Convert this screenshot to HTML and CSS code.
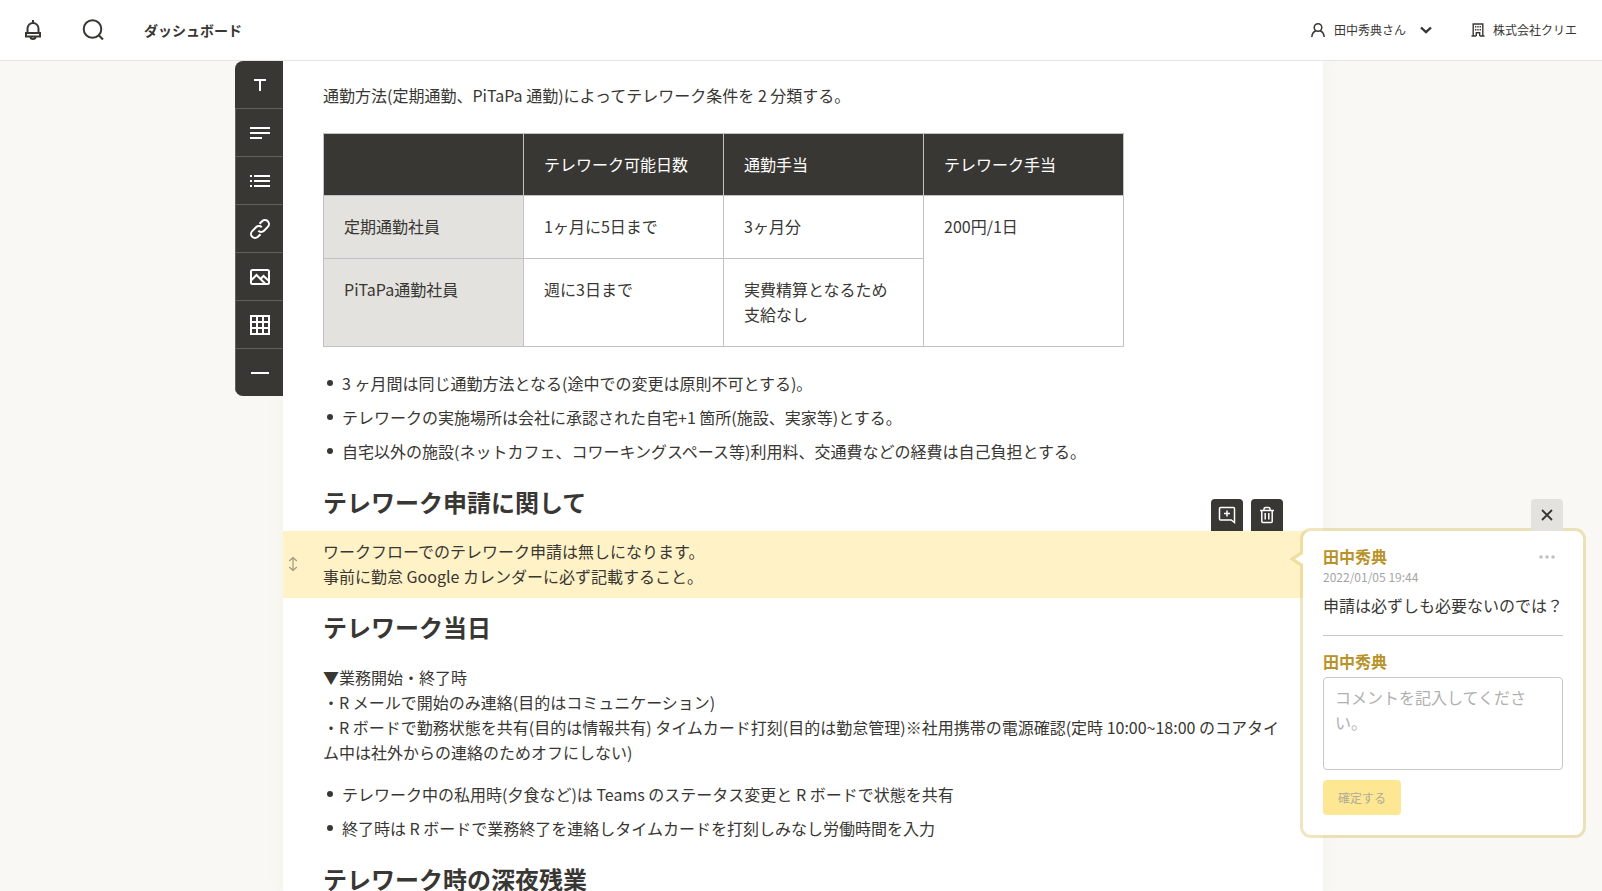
FILE: index.html
```html
<!DOCTYPE html>
<html lang="ja">
<head>
<meta charset="utf-8">
<meta name="viewport" content="width=device-width, initial-scale=1">
<title>ダッシュボード</title>
<link rel="stylesheet" href="styles.css">
</head>
<body>
<header class="header">
  <nav class="header-nav">
    <button class="icon-button" type="button" aria-label="お知らせ">
      <svg width="24" height="24" viewBox="0 0 24 24" fill="none" stroke="currentColor" stroke-width="2"><path d="M12 2v3M6.500 15v-4.500a5.500 5.500 0 0 1 11 0V15M5 15h14v3.500H5zM9.500 19a2.500 2 0 0 0 5 0"/></svg>
    </button>
    <button class="icon-button" type="button" aria-label="検索">
      <svg width="24" height="24" viewBox="0 0 24 24" fill="none" stroke="currentColor" stroke-width="2"><circle cx="11.500" cy="11" r="8.800"/><path d="M17.700 17.200l4.300 4.300"/></svg>
    </button>
    <a class="header-title" href="#">ダッシュボード</a>
  </nav>
  <div class="header-account">
    <button class="account" type="button">
      <svg width="16" height="16" viewBox="0 0 16 16" fill="none" stroke="currentColor" stroke-width="1.500"><circle cx="8" cy="5.500" r="3.800"/><path d="M1.800 15c.3-3.500 2-5.300 4-6.200M14.200 15c-.3-3.500-2-5.300-4-6.200"/></svg>
      <span>田中秀典さん</span>
      <svg class="chevron" width="12" height="8" viewBox="0 0 12 8" fill="none" stroke="currentColor" stroke-width="2.400"><path d="M1 1.500l5 4.700 5-4.700"/></svg>
    </button>
    <a class="company" href="#">
      <svg width="14" height="14" viewBox="0 0 14 14" fill="none" stroke="currentColor"><path stroke-width="1.400" d="M2.200 13V1h9.600v12M.5 13h4.700M8.800 13h4.700M5.300 13V9.700h3.400V13"/><path stroke-width="1.400" d="M4 3.800h1.400M6.300 3.800h1.400M8.600 3.800H10M4 6.700h1.400M6.300 6.700h1.400M8.600 6.700H10"/></svg>
      <span>株式会社クリエ</span>
    </a>
  </div>
</header>

<main class="workspace">
  <div class="toolbar" role="toolbar" aria-label="ブロックを追加">
    <button class="tool" type="button" aria-label="見出し"><svg width="24" height="24" viewBox="0 0 24 24"><path d="M6 7h12M12 7v11"/></svg></button>
    <button class="tool" type="button" aria-label="文章"><svg width="24" height="24" viewBox="0 0 24 24"><path d="M2 7h20M2 12h20M2 17h12"/></svg></button>
    <button class="tool" type="button" aria-label="リスト"><svg width="24" height="24" viewBox="0 0 24 24"><path d="M2 7h2M6 7h16M2 12h2M6 12h16M2 17h2M6 17h16"/></svg></button>
    <button class="tool" type="button" aria-label="リンク"><svg width="24" height="24" viewBox="0 0 24 24"><path d="M10.300 13.700a4 4 0 0 0 5.700 0l3.800-3.800a4 4 0 0 0-5.700-5.700l-2.600 2.600M13.700 10.300a4 4 0 0 0-5.700 0l-3.800 3.800a4 4 0 0 0 5.700 5.700l2.600-2.600"/></svg></button>
    <button class="tool" type="button" aria-label="画像"><svg width="24" height="24" viewBox="0 0 24 24"><rect x="3" y="5" width="18" height="14" rx="1.500"/><path d="M3 15.500l5.500-5.500 9 9M12.500 14l3-3 5.500 5"/></svg></button>
    <button class="tool" type="button" aria-label="表"><svg width="24" height="24" viewBox="0 0 24 24"><path d="M3 3h18v18H3zM9 3v18M15 3v18M3 9h18M3 15h18"/></svg></button>
    <button class="tool" type="button" aria-label="区切り線"><svg width="24" height="24" viewBox="0 0 24 24"><path d="M3 12h18"/></svg></button>
  </div>

  <article class="document">
    <p class="block">通勤方法(定期通勤、PiTaPa 通勤)によってテレワーク条件を 2 分類する。</p>
    <table class="rules">
      <thead>
        <tr><td></td><th scope="col">テレワーク可能日数</th><th scope="col">通勤手当</th><th scope="col">テレワーク手当</th></tr>
      </thead>
      <tbody>
        <tr><th scope="row">定期通勤社員</th><td>1ヶ月に5日まで</td><td>3ヶ月分</td><td rowspan="2">200円/1日</td></tr>
        <tr><th scope="row">PiTaPa通勤社員</th><td>週に3日まで</td><td>実費精算となるため<br>支給なし</td></tr>
      </tbody>
    </table>
    <ul class="list">
      <li>3 ヶ月間は同じ通勤方法となる(途中での変更は原則不可とする)。</li>
      <li>テレワークの実施場所は会社に承認された自宅+1 箇所(施設、実家等)とする。</li>
      <li>自宅以外の施設(ネットカフェ、コワーキングスペース等)利用料、交通費などの経費は自己負担とする。</li>
    </ul>
    <h2 class="heading">テレワーク申請に関して</h2>
    <section class="selected">
      <svg class="drag" width="10" height="16" viewBox="0 0 10 16" fill="none" stroke="currentColor" stroke-width="1.200"><path d="M5 1.500v13M1.200 5L5 1.500 8.800 5M1.200 11L5 14.500 8.800 11"/></svg>
      <p>ワークフローでのテレワーク申請は無しになります。<br>事前に勤怠 Google カレンダーに必ず記載すること。</p>
      <div class="block-actions">
        <button class="block-action" type="button" aria-label="コメントを追加"><svg width="20" height="20" viewBox="0 0 20 20" fill="none" stroke="currentColor" stroke-width="1.500"><path d="M3.500 2.500h13a1 1 0 0 1 1 1V17.500L14.200 15H3.500a1 1 0 0 1-1-1V3.500a1 1 0 0 1 1-1zM10 5.500v6M7 8.500h6"/></svg></button>
        <button class="block-action" type="button" aria-label="削除"><svg width="20" height="20" viewBox="0 0 20 20" fill="none" stroke="currentColor" stroke-width="1.500"><path d="M3 5.500h14M7 5V4a1.500 1.500 0 0 1 1.500-1.500h3A1.500 1.500 0 0 1 13 4v1M4.800 6v10.500a1 1 0 0 0 1 1h8.400a1 1 0 0 0 1-1V6M8.200 8v6.500M11.800 8v6.500"/></svg></button>
      </div>
      <aside class="popover" aria-label="コメント">
        <svg class="pointer" width="13" height="20" viewBox="0 0 13 20"><path class="pointer-fill" d="M13 3L3 10l10 7z"/><path class="pointer-edge" d="M13 1v4L5 10l8 5v4L0 10.500v-1z"/></svg>
        <button class="close" type="button" aria-label="閉じる"><svg width="12" height="12" viewBox="0 0 12 12" fill="none" stroke="currentColor" stroke-width="1.800"><path d="M1 1l10 10M11 1L1 11"/></svg></button>
        <div class="comment">
          <div class="comment-head">
            <strong class="author">田中秀典</strong>
            <button class="more" type="button" aria-label="メニュー"><svg width="16" height="4" viewBox="0 0 16 4" fill="currentColor"><circle cx="2" cy="2" r="1.800"/><circle cx="8" cy="2" r="1.800"/><circle cx="14" cy="2" r="1.800"/></svg></button>
          </div>
          <time class="date">2022/01/05 19:44</time>
          <p class="message">申請は必ずしも必要ないのでは？</p>
        </div>
        <form class="reply">
          <label class="author" for="reply">田中秀典</label>
          <textarea class="reply-text" id="reply" placeholder="コメントを記入してください。"></textarea>
          <button class="submit" type="button" disabled>確定する</button>
        </form>
      </aside>
    </section>
    <h2 class="heading">テレワーク当日</h2>
    <p class="block-after">▼業務開始・終了時<br>・R メールで開始のみ連絡(目的はコミュニケーション)<br>・R ボードで勤務状態を共有(目的は情報共有) タイムカード打刻(目的は勤怠管理)※社用携帯の電源確認(定時 10:00~18:00 のコアタイム中は社外からの連絡のためオフにしない)</p>
    <ul class="list">
      <li>テレワーク中の私用時(夕食など)は Teams のステータス変更と R ボードで状態を共有</li>
      <li>終了時は R ボードで業務終了を連絡しタイムカードを打刻しみなし労働時間を入力</li>
    </ul>
    <h2 class="heading">テレワーク時の深夜残業</h2>
  </article>
</main>
</body>
</html>
```

FILE: styles.css
```css
* {
  box-sizing: border-box;
}

body {
  display: flex;
  flex-direction: column;
  height: 100vh;
  margin: 0;
  overflow: hidden;
  background: #f9f8f4;
  color: #393733;
  font-family: "Noto Sans CJK JP", sans-serif;
  font-size: 16px;
  line-height: 25px;
}

button,
textarea {
  font: inherit;
  color: inherit;
}

button {
  display: flex;
  align-items: center;
  justify-content: center;
  padding: 0;
  border: 0;
  background: none;
}

a {
  color: inherit;
  text-decoration: none;
}

p,
ul,
h2 {
  margin: 0;
  padding: 0;
}

svg {
  flex: none;
}

/* Header */
.header {
  position: relative;
  z-index: 2;
  display: flex;
  flex: none;
  align-items: center;
  justify-content: space-between;
  height: 61px;
  padding: 0 25px 0 21px;
  border-bottom: 1px solid #e5e5e5;
  background: #fff;
}

.header-nav {
  display: flex;
  align-items: center;
  gap: 36px;
}

.header-title {
  padding-left: 3px;
  font-size: 14px;
  font-weight: 700;
  line-height: 24px;
}

.header-account,
.account,
.company {
  display: flex;
  align-items: center;
  font-size: 12px;
  line-height: 24px;
}

.header-account {
  gap: 39px;
}

.account,
.company {
  gap: 8px;
}

.chevron {
  margin-left: 6px;
}

/* Editor */
.workspace {
  display: flex;
  flex: 1;
  align-items: flex-start;
  justify-content: center;
  min-height: 0;
  padding-right: 44px;
}

.toolbar {
  position: relative;
  z-index: 1;
  flex: none;
  width: 48px;
  overflow: hidden;
  border-radius: 8px 0 0 8px;
  background: #393733;
}

.tool {
  width: 100%;
  height: 48px;
  border-top: 1px solid #62615d;
  border-left: 1px solid #62615d;
  color: #fff;
}

.tool:first-child {
  height: 47px;
  border-color: transparent;
}

.tool svg {
  fill: none;
  stroke: currentColor;
  stroke-width: 2px;
}

.document {
  flex: 0 1 1040px;
  min-height: 100%;
  padding: 22px 40px 0;
  background: #fff;
  box-shadow: 0 0 16px #f1f0e8;
}

.rules {
  width: 801px;
  margin: 25px 0 24px;
  border-collapse: collapse;
  table-layout: fixed;
}

.rules th,
.rules td {
  padding: 18px 20px;
  border: 1px solid #c2c2c2;
  font-weight: 400;
  text-align: left;
  vertical-align: top;
}

.rules thead th,
.rules thead td {
  background: #393733;
  color: #fff;
}

.rules tbody th,
.rules tbody td {
  padding-bottom: 19px;
}

.rules tbody th {
  background: #e3e2de;
}

.list {
  display: flex;
  flex-direction: column;
  gap: 9px;
  margin-bottom: 20px;
  list-style: none;
}

.list li {
  display: flex;
  gap: 9px;
  padding-left: 4px;
}

.list li::before {
  flex: none;
  width: 6px;
  height: 6px;
  margin-top: 9px;
  border-radius: 50%;
  background: #393733;
  content: "";
}

.heading {
  font-size: 24px;
  font-weight: 700;
  line-height: 36px;
}

.selected {
  position: relative;
  margin: 11px -40px;
  padding: 8px 40px 9px;
  background: #fff2c6;
}

.drag {
  position: absolute;
  top: 25px;
  left: 5px;
  color: #9d987f;
}

.block-actions {
  position: absolute;
  right: 40px;
  bottom: 100%;
  display: flex;
  gap: 8px;
}

.block-action {
  width: 32px;
  height: 32px;
  border-radius: 4px 4px 0 0;
  background: #393733;
  color: #fff;
}

.block-after {
  margin: 20px 0 17px;
}

/* Comment */
.popover {
  position: absolute;
  top: -3px;
  left: calc(100% - 23px);
  width: 286px;
  padding: 13px 20px 20px;
  border: 3px solid rgba(214, 190, 98, 0.4);
  border-radius: 11px;
  background: #fff;
  background-clip: padding-box;
}

.pointer {
  position: absolute;
  top: 18px;
  right: 100%;
}

.pointer-fill {
  fill: #fff;
}

.pointer-edge {
  fill: #efdf9e;
}

.close {
  position: absolute;
  right: 20px;
  bottom: 100%;
  width: 32px;
  height: 32px;
  border-radius: 4px 4px 0 0;
  background: #e3e2de;
}

.comment {
  padding-bottom: 17px;
  border-bottom: 1px solid #c8c8c8;
}

.comment-head {
  display: flex;
  align-items: center;
  justify-content: space-between;
}

.author {
  color: #b8932a;
  font-weight: 700;
}

.more {
  width: 32px;
  height: 24px;
  color: #c2c2c2;
}

.date {
  display: block;
  color: #a5a5a5;
  font-size: 12px;
  line-height: 16px;
}

.message {
  margin-top: 8px;
  white-space: nowrap;
}

.reply {
  display: flex;
  flex-direction: column;
  align-items: flex-start;
  margin-top: 13px;
}

.reply-text {
  width: 100%;
  height: 93px;
  margin: 3px 0 10px;
  padding: 7px 11px;
  border: 1px solid #c8c8c8;
  border-radius: 4px;
  background: #fff;
  resize: none;
}

.reply-text::placeholder {
  color: #b0b0b0;
}

.submit {
  width: 78px;
  height: 35px;
  border-radius: 4px;
  background: #fee793;
  color: #b0ab98;
  font-size: 12px;
}
```
